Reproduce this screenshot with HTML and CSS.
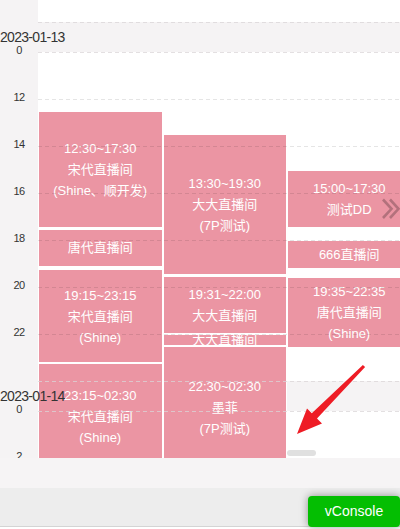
FILE: index.html
```html
<!DOCTYPE html>
<html lang="zh-CN">
<head>
<meta charset="utf-8">
<title>排班</title>
<link rel="stylesheet" href="styles.css">
</head>
<body>
<div class="screen">
  <div class="scroller">
    <div class="row spacer"><div class="tick"></div><div class="cell"></div></div>

    <div class="band"><span class="date">2023-01-13</span></div>
    <div class="row first"><div class="tick"><span>0</span></div><div class="cell"></div></div>
    <div class="row"><div class="tick"><span>12</span></div><div class="cell"></div></div>
    <div class="row"><div class="tick"><span>14</span></div><div class="cell"></div></div>
    <div class="row"><div class="tick"><span>16</span></div><div class="cell"></div></div>
    <div class="row"><div class="tick"><span>18</span></div><div class="cell"></div></div>
    <div class="row"><div class="tick"><span>20</span></div><div class="cell"></div></div>
    <div class="row"><div class="tick"><span>22</span></div><div class="cell"></div></div>

    <div class="band"><span class="date">2023-01-14</span></div>
    <div class="row first"><div class="tick"><span>0</span></div><div class="cell"></div></div>
    <div class="row"><div class="tick"><span>2</span></div><div class="cell"></div></div>

    <div class="events">
      <div class="ev" style="left:0;top:110.75px;height:117.5px"><span>12:30~17:30</span><span>宋代直播间</span><span>(Shine、顺开发)</span></div>
      <div class="ev" style="left:0;top:229px;height:37.5px"><span>唐代直播间</span></div>
      <div class="ev" style="left:0;top:269.4px;height:94px"><span>19:15~23:15</span><span>宋代直播间</span><span>(Shine)</span></div>
      <div class="ev" style="left:0;top:363.4px;height:106.4px"><span>23:15~02:30</span><span>宋代直播间</span><span>(Shine)</span></div>

      <div class="ev" style="left:124.5px;top:134.25px;height:141px"><span>13:30~19:30</span><span>大大直播间</span><span>(7P测试)</span></div>
      <div class="ev" style="left:124.5px;top:275.6px;height:58.4px"><span>19:31~22:00</span><span>大大直播间</span></div>
      <div class="ev" style="left:124.5px;top:334px;height:11.75px"><span>大大直播间</span></div>
      <div class="ev" style="left:124.5px;top:345.75px;height:124px"><span>22:30~02:30</span><span>墨菲</span><span>(7P测试)</span></div>

      <div class="ev" style="left:249px;top:169.5px;height:58.75px"><span>15:00~17:30</span><span>测试DD</span></div>
      <div class="ev" style="left:249px;top:240px;height:28.5px"><span>666直播间</span></div>
      <div class="ev" style="left:249px;top:277.2px;height:70.5px"><span>19:35~22:35</span><span>唐代直播间</span><span>(Shine)</span></div>
    </div>

    <svg class="more" width="19" height="22" viewBox="0 0 19 22" aria-hidden="true">
      <polyline points="2,1.5 10.5,10.8 2,20" />
      <polyline points="9,1.5 17.5,10.8 9,20" />
    </svg>
    <div class="thumb"></div>
  </div>
  <div class="gap"></div>
  <div class="toolbar"></div>
  <div class="vconsole">vConsole</div>
  <svg class="arrow" width="400" height="529" viewBox="0 0 400 529" aria-hidden="true">
    <polygon points="362.9,364.9 365.1,367.1 317,418.5 322,423.5 297,434 307,408.6 311.8,413.3" />
  </svg>
</div>
</body>
</html>
```

FILE: styles.css
```css
* { box-sizing: border-box; }
html, body { margin: 0; padding: 0; background: #fff; }
body {
  font-family: "Liberation Sans", "Noto Sans CJK SC", sans-serif;
  color: #333;
}
.screen {
  position: relative;
  width: 400px;
  height: 529px;
  overflow: hidden;
  display: flex;
  flex-direction: column;
}
.scroller {
  position: relative;
  height: 458px;
  flex: none;
  overflow: hidden;
  background: #fff;
}
.row {
  position: relative;
  display: flex;
  height: 47px;
}
.row.spacer { height: 22px; }
.row::after {
  content: "";
  position: absolute;
  left: 38px;
  right: 0;
  top: 0;
  height: 1px;
  z-index: 3;
  background: repeating-linear-gradient(90deg, rgba(0,0,0,0.1) 0 4px, transparent 4px 7px);
}
.row.first::after, .row.spacer::after { display: none; }
.tick {
  width: 38px;
  flex: none;
  background: #f5f3f4;
  text-align: center;
  font-size: 11px;
  line-height: 12px;
  letter-spacing: -0.5px;
  color: #333;
}
.tick span {
  display: block;
  margin-top: -8px;
}
.cell { flex: 1; }
.band {
  position: relative;
  height: 30px;
  background: #f5f3f4;
  display: flex;
  align-items: center;
}
.band::before, .band::after {
  content: "";
  position: absolute;
  left: 38px;
  right: 0;
  height: 1px;
  z-index: 3;
  background: repeating-linear-gradient(90deg, rgba(218,213,215,0.75) 0 4px, transparent 4px 7px);
}
.band::before { top: 0; }
.band::after { top: 30px; }
.date {
  position: relative;
  z-index: 3;
  font-size: 14px;
  letter-spacing: -0.7px;
  color: #333;
  white-space: nowrap;
}
.events {
  position: absolute;
  top: 0;
  left: 38px;
  right: 0;
  bottom: 0;
  z-index: 2;
}
.ev {
  position: absolute;
  width: 124.5px;
  border: 1px solid #fff;
  background: #eb95a3;
  color: #fff;
  display: flex;
  flex-direction: column;
  align-items: center;
  justify-content: center;
  overflow: hidden;
  font-size: 13px;
  line-height: 21px;
  text-align: center;
  white-space: nowrap;
}
.more {
  position: absolute;
  left: 381px;
  top: 198px;
  z-index: 4;
  fill: none;
  stroke: rgba(0,0,0,0.24);
  stroke-width: 2.6;
}
.thumb {
  position: absolute;
  left: 287px;
  top: 450px;
  width: 29px;
  height: 6px;
  border-radius: 3px;
  background: #e0e0e0;
  z-index: 4;
}
.gap {
  height: 30px;
  flex: none;
  background: #f6f4f5;
}
.toolbar {
  flex: 1;
  background: #ededed;
  border-bottom: 1px solid #d4d4d4;
  margin-bottom: 2px;
}
.vconsole {
  position: absolute;
  right: 0;
  top: 496px;
  width: 92px;
  height: 31px;
  background: #04be02;
  color: #fff;
  font-size: 14px;
  line-height: 31px;
  text-align: center;
  border-radius: 4px;
  box-shadow: 0 0 8px rgba(0,0,0,0.4);
  z-index: 5;
}
.arrow {
  position: absolute;
  left: 0;
  top: 0;
  z-index: 6;
  pointer-events: none;
}
.arrow polygon { fill: #ee1c25; }
```
